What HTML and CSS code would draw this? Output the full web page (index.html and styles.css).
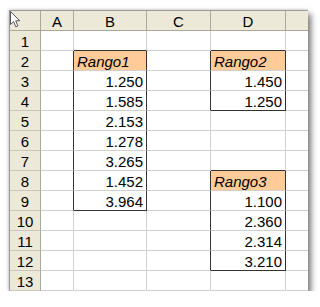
FILE: index.html
```html
<!DOCTYPE html>
<html>
<head>
<meta charset="utf-8">
<link rel="stylesheet" href="styles.css">
</head>
<body>
<div class="frame">
  <div class="sheet">
    <div class="hd corner">
      <svg class="cursor" width="11" height="17" viewBox="0 0 11 17"><path d="M0.5 0.5 L0.5 13.5 L3.6 10.6 L5.8 15.8 L7.9 14.9 L5.7 9.8 L9.8 9.8 Z" fill="#fff" stroke="#555" stroke-width="1"/></svg>
    </div>
    <div class="hd col">A</div>
    <div class="hd col">B</div>
    <div class="hd col">C</div>
    <div class="hd col">D</div>
    <div class="hd col last"></div>

    <div class="hd row">1</div><div class="c"></div><div class="c eb"></div><div class="c"></div><div class="c eb"></div><div class="c last"></div>
    <div class="hd row">2</div><div class="c er"></div><div class="c er title">Rango1</div><div class="c er"></div><div class="c er title">Rango2</div><div class="c last"></div>
    <div class="hd row">3</div><div class="c er"></div><div class="c er num">1.250</div><div class="c er"></div><div class="c er num">1.450</div><div class="c last"></div>
    <div class="hd row">4</div><div class="c er"></div><div class="c er num">1.585</div><div class="c er"></div><div class="c er eb num">1.250</div><div class="c last"></div>
    <div class="hd row">5</div><div class="c er"></div><div class="c er num">2.153</div><div class="c"></div><div class="c"></div><div class="c last"></div>
    <div class="hd row">6</div><div class="c er"></div><div class="c er num">1.278</div><div class="c"></div><div class="c"></div><div class="c last"></div>
    <div class="hd row">7</div><div class="c er"></div><div class="c er num">3.265</div><div class="c"></div><div class="c eb"></div><div class="c last"></div>
    <div class="hd row">8</div><div class="c er"></div><div class="c er num">1.452</div><div class="c er"></div><div class="c er title">Rango3</div><div class="c last"></div>
    <div class="hd row">9</div><div class="c er"></div><div class="c er eb num">3.964</div><div class="c er"></div><div class="c er num">1.100</div><div class="c last"></div>
    <div class="hd row">10</div><div class="c"></div><div class="c"></div><div class="c er"></div><div class="c er num">2.360</div><div class="c last"></div>
    <div class="hd row">11</div><div class="c"></div><div class="c"></div><div class="c er"></div><div class="c er num">2.314</div><div class="c last"></div>
    <div class="hd row">12</div><div class="c"></div><div class="c"></div><div class="c er"></div><div class="c er eb num">3.210</div><div class="c last"></div>
    <div class="hd row">13</div><div class="c"></div><div class="c"></div><div class="c"></div><div class="c"></div><div class="c last"></div>
  </div>
</div>
</body>
</html>
```
FILE: styles.css
```css
html, body {
  margin: 0;
  padding: 0;
  background: #fff;
}
.frame {
  padding: 10px 0 0 9px;
}
.sheet {
  display: grid;
  grid-template-columns: 31px 33px 73px 64px 75px 22px;
  grid-template-rows: repeat(14, 20px);
  width: 298px;
  border-left: 1px solid #9a9a9a;
  border-top: 1px solid #9a9a9a;
  box-shadow: 3px 4px 6px rgba(0,0,0,0.55), -1px -1px 2px rgba(0,0,0,0.12);
  font-family: "Liberation Sans", Arial, sans-serif;
  font-size: 15px;
  color: #000;
  background: #fff;
}
.sheet > div {
  box-sizing: border-box;
}
.hd {
  background: #ece9d8;
  border-right: 1px solid #aca899;
  border-bottom: 1px solid #aca899;
  display: flex;
  align-items: center;
  justify-content: center;
  line-height: 1;
  color: #000;
  padding-top: 2px;
}
.hd.row {
  border-bottom-color: #cbc7b8;
}
.hd.last, .c.last {
  border-right: none;
}
.corner {
  position: relative;
  justify-content: flex-start;
  align-items: flex-start;
}
.cursor {
  position: absolute;
  left: 0;
  top: 0;
}
.c {
  border-right: 1px solid #d0d0d0;
  border-bottom: 1px solid #d0d0d0;
  display: flex;
  align-items: center;
  line-height: 1;
  padding: 2px 3px 0 3px;
}
.c.er {
  border-right-color: #333;
}
.c.eb {
  border-bottom-color: #333;
}
.num {
  justify-content: flex-end;
}
.title {
  background: #ffcc99;
  font-style: italic;
}
```
